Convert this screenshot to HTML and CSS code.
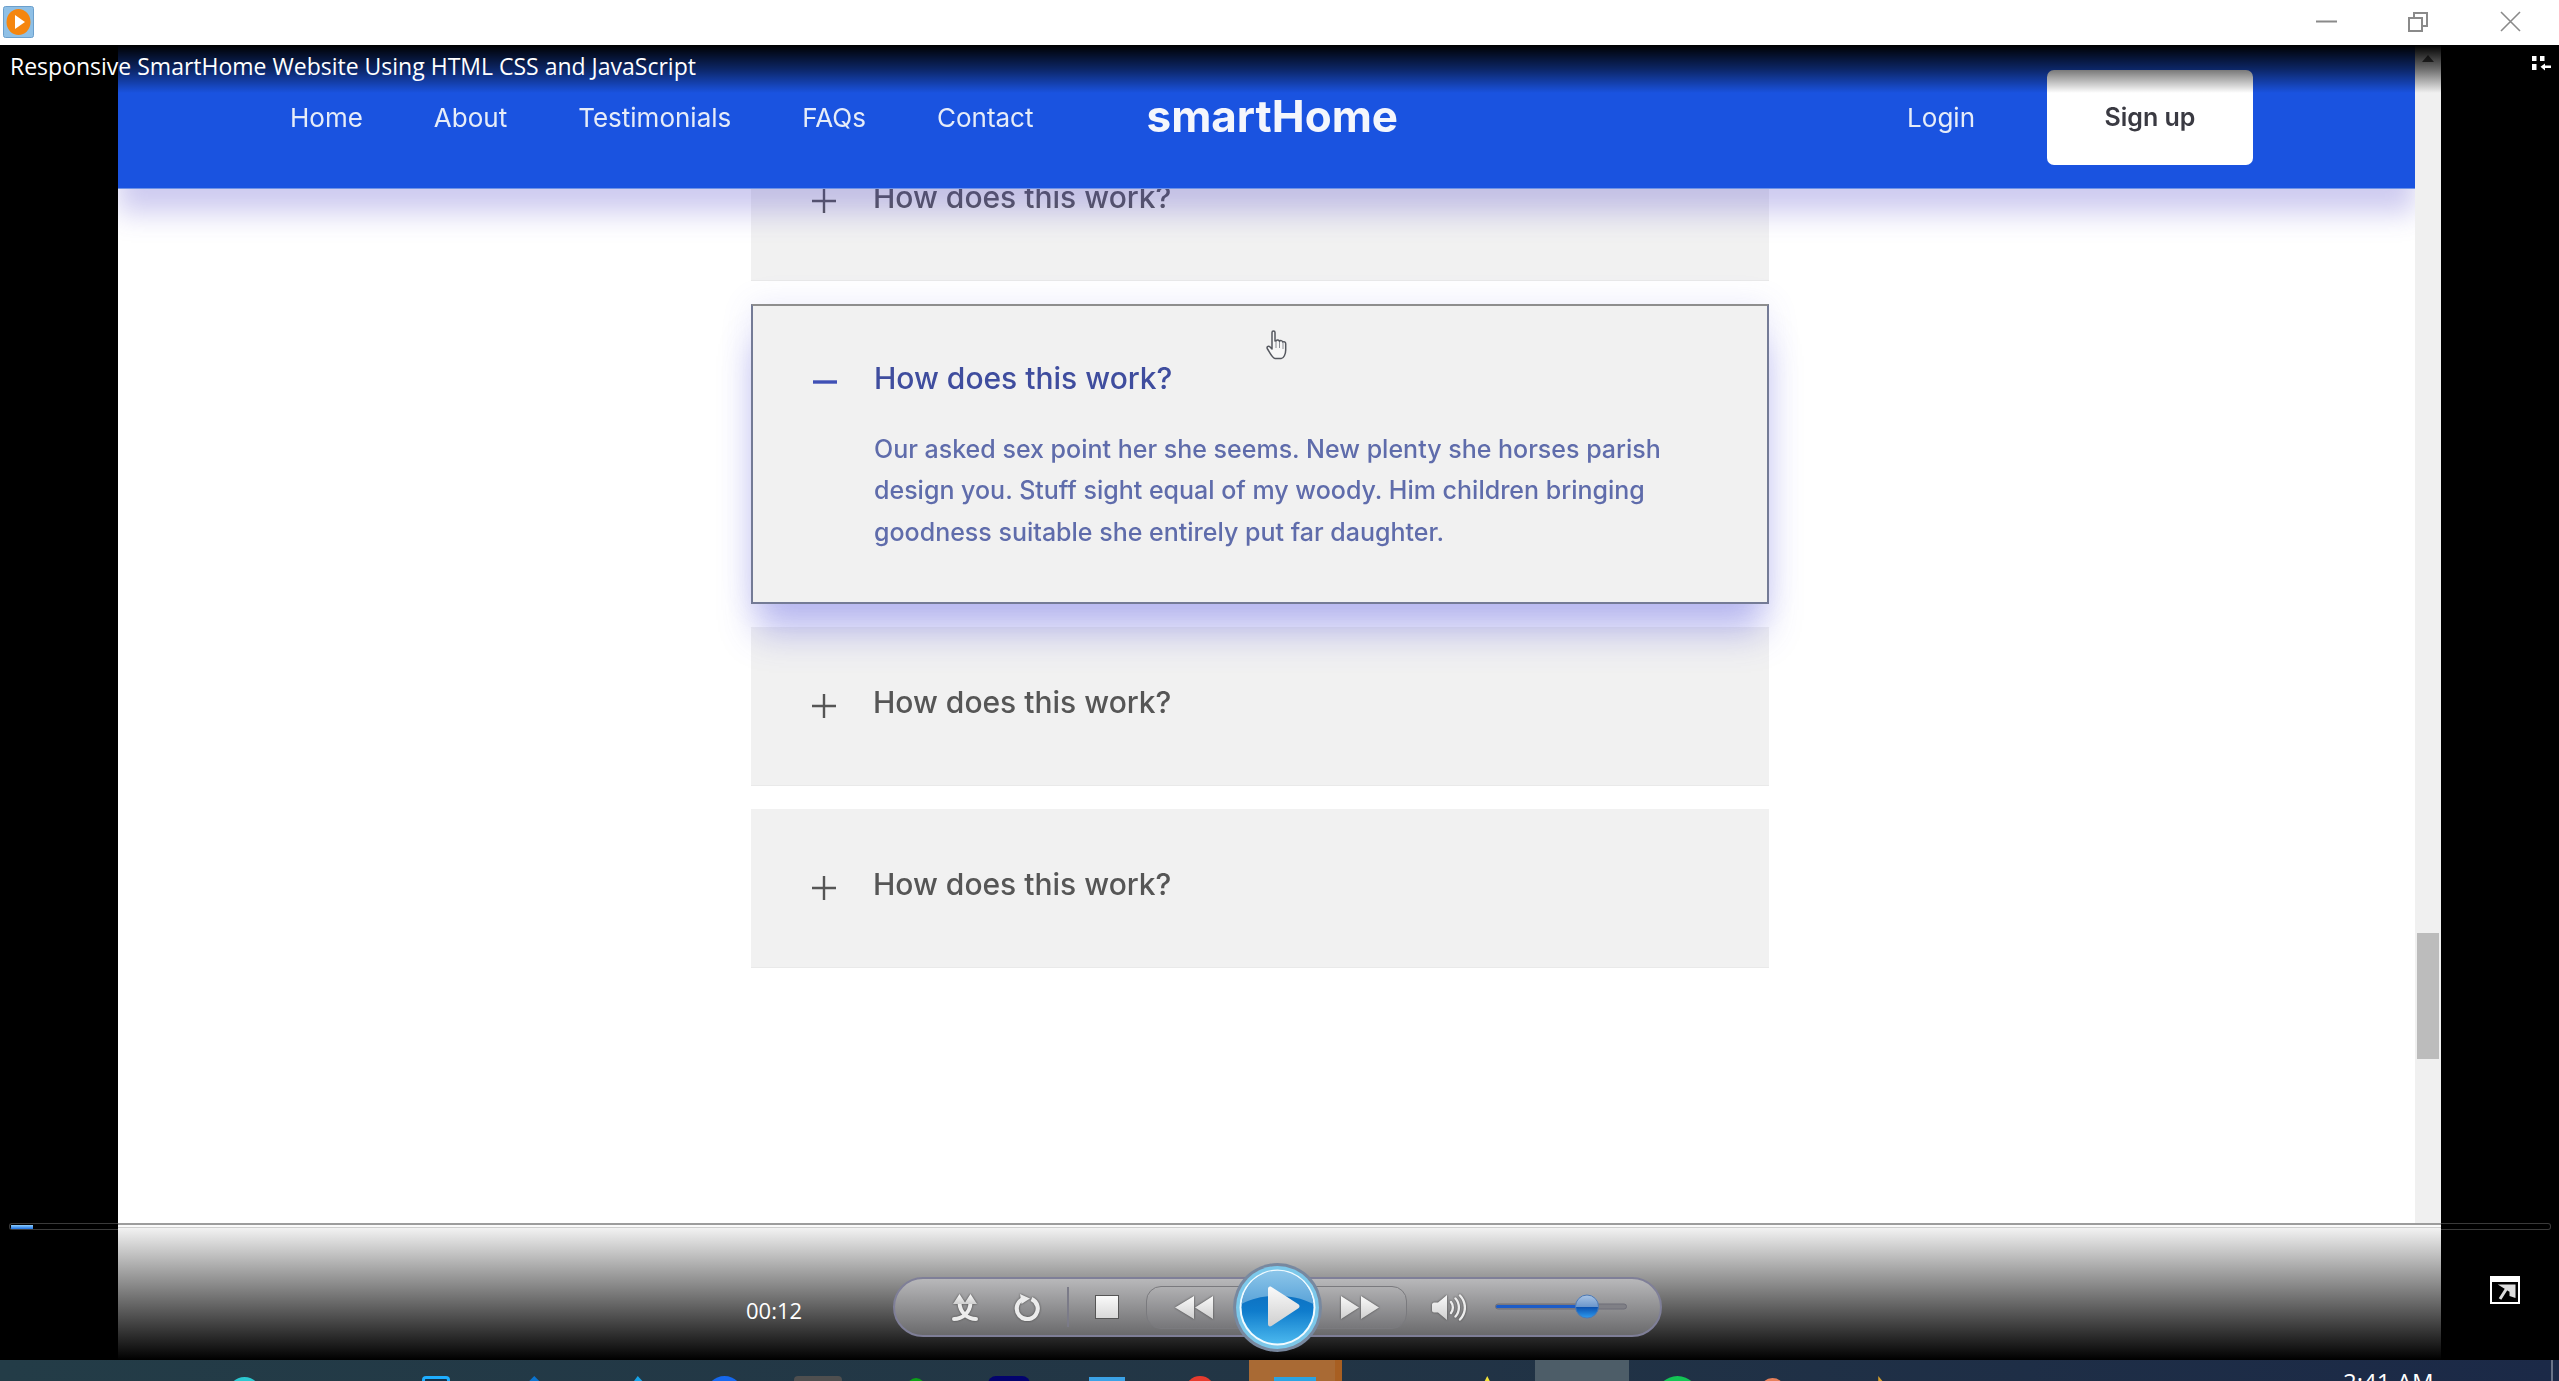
FILE: index.html
```html
<!DOCTYPE html>
<html lang="en">
<head>
<meta charset="utf-8">
<title>Media Player</title>
<link rel="stylesheet" href="styles.css">
</head>
<body>
<svg class="defs" width="0" height="0" aria-hidden="true">
  <defs>
    <linearGradient id="glyph" x1="0" y1="0" x2="0" y2="1"><stop offset="0" stop-color="#fafafa"/><stop offset="1" stop-color="#cfcfcf"/></linearGradient>
    <linearGradient id="playLow" x1="0" y1="0" x2="0" y2="1"><stop offset="0" stop-color="#0a62b4"/><stop offset=".55" stop-color="#0f7ccc"/><stop offset="1" stop-color="#4bb8ee"/></linearGradient>
    <linearGradient id="playTop" x1="0" y1="0" x2="0" y2="1"><stop offset="0" stop-color="#8cc6ea"/><stop offset="1" stop-color="#5aa3d8"/></linearGradient>
    <linearGradient id="thumbGrad" x1="0" y1="0" x2="0" y2="1"><stop offset="0" stop-color="#a9c4e4"/><stop offset=".5" stop-color="#6d97cc"/><stop offset=".52" stop-color="#0b4fae"/><stop offset="1" stop-color="#2d9cf0"/></linearGradient>
  </defs>
</svg>

<header class="titlebar">
  <svg class="app-icon" width="31" height="32" viewBox="0 0 31 32">
    <rect x=".5" y=".5" width="30" height="31" rx="2" fill="#8fc0e6" stroke="#6b9fcc"/>
    <ellipse cx="15.5" cy="16" rx="12" ry="13" fill="#f5860f"/>
    <path d="M12 9l10 7-10 7z" fill="#fff"/>
  </svg>
  <div class="win-buttons">
    <svg width="21" height="3" viewBox="0 0 21 3"><rect width="21" height="2" y=".5" fill="#8a8a8a"/></svg>
    <svg width="21" height="20" viewBox="0 0 21 20"><path d="M1 6h13v13H1zM6 5V1h13v13h-4" fill="none" stroke="#8a8a8a" stroke-width="2"/></svg>
    <svg width="21" height="21" viewBox="0 0 21 21"><path d="M1 1l19 19M20 1L1 20" stroke="#8a8a8a" stroke-width="1.6" fill="none"/></svg>
  </div>
</header>

<main class="player">
  <div class="video">
    <div class="site">
      <nav class="nav">
        <a class="nav-link">Home</a>
        <a class="nav-link">About</a>
        <a class="nav-link">Testimonials</a>
        <a class="nav-link">FAQs</a>
        <a class="nav-link">Contact</a>
        <span class="logo">smartHome</span>
        <a class="nav-link login">Login</a>
        <a class="signup">Sign up</a>
      </nav>
      <section class="faq">
        <article class="card">
          <svg class="sign" width="26" height="26" viewBox="0 0 26 26"><path d="M13 1v24M1 13h24" stroke="#555" stroke-width="2.4"/></svg>
          <div class="card-body"><h3 class="q">How does this work?</h3></div>
        </article>
        <article class="card active">
          <svg class="sign" width="26" height="26" viewBox="0 0 26 26"><path d="M1 13h24" stroke="#3f50b5" stroke-width="3.4"/></svg>
          <div class="card-body">
            <h3 class="q">How does this work?</h3>
            <p class="a">Our asked sex point her she seems. New plenty she horses parish design you. Stuff sight equal of my woody. Him children bringing goodness suitable she entirely put far daughter.</p>
          </div>
        </article>
        <article class="card">
          <svg class="sign" width="26" height="26" viewBox="0 0 26 26"><path d="M13 1v24M1 13h24" stroke="#555" stroke-width="2.4"/></svg>
          <div class="card-body"><h3 class="q">How does this work?</h3></div>
        </article>
        <article class="card">
          <svg class="sign" width="26" height="26" viewBox="0 0 26 26"><path d="M13 1v24M1 13h24" stroke="#555" stroke-width="2.4"/></svg>
          <div class="card-body"><h3 class="q">How does this work?</h3></div>
        </article>
      </section>
    </div>
    <aside class="scrollbar">
      <i class="arrow up"></i>
      <i class="thumb"></i>
      <i class="arrow down"></i>
    </aside>
  </div>

  <svg class="cursor" width="23" height="30" viewBox="0 0 23 30">
    <path d="M7 2.5c0-2 3-2 3 0V11l1 0c1-1.600 3-1.200 3.400.3 1-1.200 3-.8 3.300.7 1.300-.7 3 0 3 1.800V20c0 4-2 8.500-4.500 8.500H10C7.500 28.500 5 23 2.500 19c-1.300-2 .7-3.600 2.300-2.300L7 19z" fill="#f7f7f7" stroke="#55585f" stroke-width="1.500" stroke-linejoin="round"/>
    <path d="M11 12v6M14.500 12v6M18 13v6" stroke="#8a8d94" stroke-width="1"/>
  </svg>

  <div class="shade-top"></div>
  <div class="video-title">Responsive SmartHome Website Using HTML CSS and JavaScript</div>
  <svg class="mini" width="19" height="15" viewBox="0 0 19 15">
    <path d="M0 0h4.500v5H0zM8 0h4.500v5H8zM0 8h4.500v6H0zM19 9.500v2.500h-6v2.500L8.500 10.800 13 7.500v2z" fill="#fff"/>
  </svg>

  <div class="seek">
    <div class="seek-side seek-left"><i class="seek-fill"></i></div>
    <div class="seek-mid"></div>
    <div class="seek-side seek-right"></div>
  </div>

  <div class="shade-bottom">
    <span class="time">00:12</span>
    <div class="pill">
      <svg class="glyph" width="26" height="27" viewBox="0 0 26 27">
        <path d="M2 25c8 0 16-6 16.500-16M24 25C16 25 8 19 7.500 9" fill="none" stroke="#ececec" stroke-width="4" stroke-linecap="round"/>
        <path d="M7.500 0l6.500 10H1zM18.500 0l6.500 10H12z" fill="url(#glyph)"/>
      </svg>
      <svg class="glyph repeat" width="26" height="27" viewBox="0 0 26 27">
        <path d="M8 5.500a10.500 10.500 0 1 0 9.500-.5" fill="none" stroke="#ececec" stroke-width="4.200"/>
        <path d="M6 0l10 4.500L7.500 10z" fill="#ececec"/>
      </svg>
      <i class="sep"></i>
      <i class="stop"></i>
      <div class="transport">
        <svg class="glyph" width="40" height="23" viewBox="0 0 40 23"><path d="M20 0v23L1 11.500zM39 0v23L21 11.500z" fill="url(#glyph)"/></svg>
        <svg class="play" width="89" height="89" viewBox="0 0 89 89">
          <circle cx="44.500" cy="44.500" r="44.500" fill="#78889f"/>
          <circle cx="44.500" cy="44.500" r="41.500" fill="#7cc8ea"/>
          <circle cx="44.500" cy="44.500" r="38" fill="#f2fbff"/>
          <circle cx="44.500" cy="44.500" r="36" fill="url(#playLow)"/>
          <path d="M8.600 41A36 36 0 0 1 80.400 41C68 35 58 33 44.500 33S21 35 8.600 41z" fill="url(#playTop)"/>
          <path d="M35 26c0-2 1.500-3 3.500-2L65 41c2 1.300 2 3.300 0 4.600L38.500 63c-2 1-3.500 0-3.500-2z" fill="url(#glyph)"/>
        </svg>
        <svg class="glyph" width="38" height="23" viewBox="0 0 38 23"><path d="M0 0v23l18-11.500zM20 0v23l18-11.500z" fill="url(#glyph)"/></svg>
      </div>
      <svg class="glyph volume" width="35" height="27" viewBox="0 0 35 27">
        <path d="M1 10.500c0-1 1-2 2-2h4L16 1v25L7 18.500H3c-1 0-2-1-2-2z" fill="url(#glyph)"/>
        <path d="M20 8c2.500 3 2.500 8 0 11M24.500 4.500c4.500 5 4.500 13 0 18M29 1.500c6.500 7 6.500 17 0 24" fill="none" stroke="#ececec" stroke-width="2.400" stroke-linecap="round"/>
      </svg>
      <svg class="slider" width="132" height="26" viewBox="0 0 132 26">
        <rect x=".5" y="10" width="131" height="5" rx="2.500" fill="#808086" stroke="#6e6e78"/>
        <rect x="1" y="11" width="92" height="3" rx="1.500" fill="#1c5cc8"/>
        <circle cx="92" cy="12.500" r="11.500" fill="url(#thumbGrad)" stroke="#4d79b4"/>
      </svg>
    </div>
  </div>

  <svg class="popout" width="30" height="28" viewBox="0 0 30 28">
    <rect x="1" y="1" width="28" height="26" fill="#000" stroke="#fff" stroke-width="2"/>
    <rect x="1" y="1" width="28" height="5" fill="#fff"/>
    <path d="M10 23l7-11M13 10h11v10l-3-1v-4z" fill="#ddd" stroke="#ddd" stroke-width="3"/>
  </svg>
</main>

<footer class="taskbar">
  <span class="slot"><i class="tb tb-teal"></i></span>
  <span class="slot"></span>
  <span class="slot"><i class="tb tb-frame"></i></span>
  <span class="slot"><i class="tb tb-diamond"></i></span>
  <span class="slot"><i class="tb tb-cyan"></i></span>
  <span class="slot"><i class="tb tb-blue"></i></span>
  <span class="slot"><i class="tb tb-gray"></i></span>
  <span class="slot"><i class="tb tb-green-sm"></i></span>
  <span class="slot"><i class="tb tb-navy"></i></span>
  <span class="slot"><i class="tb tb-sky"></i></span>
  <span class="slot"><i class="tb tb-red"></i></span>
  <span class="slot slot-on"><i class="tb tb-sky2"></i></span>
  <span class="slot"></span>
  <span class="slot"><i class="tb tb-yellow"></i></span>
  <span class="slot slot-hover"></span>
  <span class="slot"><i class="tb tb-green"></i></span>
  <span class="slot"><i class="tb tb-coral"></i></span>
  <span class="slot"><i class="tb tb-gold"></i></span>
  <span class="clock">2:41 AM</span>
  <i class="show-desktop"></i>
</footer>
</body>
</html>
```
FILE: styles.css
```css
* { box-sizing: border-box; }
html, body { margin: 0; height: 1381px; overflow: hidden; }
body { display: flex; flex-direction: column; background: #000; font-family: "Inter", "Liberation Sans", sans-serif; }
.defs { position: absolute; }

/* window title bar */
.titlebar { flex: 0 0 45px; background: #fff; display: flex; align-items: flex-start; padding: 6px 38px 0 3px; }
.win-buttons { margin-left: auto; display: flex; align-items: center; gap: 71px; margin-top: 5px; height: 21px; }

/* player */
.player { flex: 1 1 auto; position: relative; background: #000; min-height: 0; overflow: hidden; }
.video { margin-left: 118px; width: 2323px; height: 100%; display: flex; }
.site { flex: 1 1 auto; min-width: 0; background: #fff; display: flex; flex-direction: column; overflow: hidden; filter: blur(.7px); }

.nav { flex: 0 0 144px; position: relative; z-index: 2; display: flex; align-items: center; gap: 71px; padding: 1px 162px 0 172px; background: #1a53e0; border-bottom: 1px solid #6f93e6; color: #e6ecf8; box-shadow: 0 24px 26px rgba(80, 70, 200, .28); }
.nav-link { font-size: 26px; font-weight: 400; }
.logo { margin-left: 42px; margin-top: -2px; font-size: 44px; font-weight: 700; color: #f4f6fc; }
.login { margin-left: auto; }
.signup { width: 206px; height: 95px; margin-left: 1px; display: flex; align-items: center; justify-content: center; background: #fff; border-radius: 7px; color: #3a3a42; font-size: 25px; font-weight: 600; }

.faq { margin: -67px 0 0 633px; width: 1018px; display: flex; flex-direction: column; gap: 23px; }
.card { display: flex; gap: 36px; padding: 55px 60px 63px; height: 159px; background: #f1f1f1; border-bottom: 1px solid #e9e9e9; }
.sign { flex: none; margin-top: 11px; }
.q { margin: 0; font-size: 30px; line-height: 40px; font-weight: 500; color: #565656; }
.a { margin: 31px 0 0; font-size: 25px; line-height: 41.3px; font-weight: 500; color: #5f6cab; }
.active { position: relative; z-index: 1; height: 300px; padding: 52px 60px 0 59px; border: 2px solid #747b96; border-top-color: #8e8e8e; box-shadow: 0 34px 34px -6px rgba(75, 75, 215, .36), 0 0 30px rgba(90, 90, 220, .12); }
.active .q { color: #3f4d9e; }

.scrollbar { flex: 0 0 26px; background: #f0f0f0; display: flex; flex-direction: column; align-items: center; padding: 10px 2px 11px; }
.arrow { width: 0; height: 0; border-left: 6px solid transparent; border-right: 6px solid transparent; }
.up { border-bottom: 7px solid #555; }
.down { margin-top: auto; border-top: 7px solid #333; }
.thumb { width: 22px; height: 126px; margin-top: 871px; background: #bcbcbc; }

.cursor { position: absolute; left: 1265px; top: 285px; z-index: 3; filter: blur(.4px); }

.shade-top { position: absolute; left: 118px; top: 0; width: 2323px; height: 48px; background: linear-gradient(#000, rgba(0, 0, 0, .55) 50%, rgba(0, 0, 0, 0)); }
.video-title { position: absolute; left: 10px; top: 5px; color: #fff; font-family: "Open Sans", "Liberation Sans", sans-serif; font-size: 23px; line-height: 32px; white-space: nowrap; }
.mini { position: absolute; right: 8px; top: 11px; }
.popout { position: absolute; left: 2490px; top: 1231px; }

/* seek bar */
.seek { position: absolute; left: 9px; top: 1178px; width: 2542px; height: 7px; display: flex; }
.seek-side { position: relative; height: 7px; border: 1px solid #3a3a3a; background: #000; }
.seek-left { flex: 0 0 109px; border-right: 0; border-radius: 3px 0 0 3px; }
.seek-right { flex: 1 1 auto; border-left: 0; border-radius: 0 3px 3px 0; }
.seek-mid { flex: 0 0 2323px; height: 6px; border-top: 2px solid #9c9c9c; border-bottom: 2px solid #cfcfcf; background: #fafafa; }
.seek-fill { position: absolute; left: 1px; top: 1px; width: 22px; height: 4px; background: linear-gradient(#8fd0ff, #1c6fe0); }

/* control strip */
.shade-bottom { position: absolute; left: 118px; top: 1183px; width: 2323px; height: 132px; padding: 49px 0 0 628px; display: flex; align-items: flex-start; gap: 92px; background: linear-gradient(#f2f2f2, #000); }
.time { width: 55px; margin-top: 17px; color: #fff; font-family: "Open Sans", "Liberation Sans", sans-serif; font-size: 22px; line-height: 32px; white-space: nowrap; }
.pill { width: 769px; height: 60px; flex: none; display: flex; align-items: center; padding-left: 57px; border: 2px solid #7f7f98; border-radius: 30px; background: linear-gradient(#b8b8ba, #6a6a6c); }
.glyph { flex: none; filter: drop-shadow(0 0 1px #444); }
.repeat { margin-left: 36px; }
.sep { flex: none; width: 2px; height: 40px; margin-left: 27px; background: #7b7b88; }
.stop { flex: none; width: 22px; height: 22px; margin-left: 27px; background: linear-gradient(#fafafa, #d8d8d8); box-shadow: 0 0 0 1px #555; }
.transport { flex: none; width: 261px; height: 43px; margin-left: 28px; padding: 0 27px; display: flex; align-items: center; justify-content: space-between; border: 1px solid #7a7a7e; border-radius: 15px; background: linear-gradient(#b0b0b2, #77777a); }
.play { flex: none; margin: -23px 0; position: relative; z-index: 1; }
.volume { margin-left: 24px; }
.slider { flex: none; margin-left: 29px; }

/* windows taskbar */
.taskbar { flex: 0 0 21px; display: flex; align-items: flex-start; position: relative; overflow: hidden; padding-left: 197px; background: linear-gradient(90deg, #233c47, #223545 50%, #1b2947); }
.slot { flex: 0 0 95.5px; height: 21px; display: flex; justify-content: center; }
.slot-on { background: linear-gradient(90deg, #a96a34 92%, #a85f22 92%); margin: 0 1px; flex-basis: 93.5px; }
.slot-hover { background: #4d5d68; margin: 0 1px; flex-basis: 93.500px; }
.tb { display: block; margin-top: 16px; height: 12px; }
.tb-teal { width: 33px; margin-top: 17px; border-radius: 50%; height: 33px; background: #2cc7d0; }
.tb-frame { width: 28px; margin-top: 16px; border: 3px solid #1eaeff; border-bottom: 0; border-radius: 4px 4px 0 0; background: #12324a; }
.tb-diamond { width: 18px; height: 18px; margin: 16px 0 0 6px; clip-path: polygon(50% 0, 100% 50%, 0 50%); background: #0b74cf; }
.tb-cyan { width: 20px; height: 20px; margin: 16px 0 0 24px; clip-path: polygon(45% 0, 100% 60%, 0 60%); background: #17a3e8; }
.tb-blue { width: 37px; height: 37px; margin-left: 4px; border-radius: 50%; background: #1668ee; }
.tb-gray { width: 48px; border-radius: 4px 4px 0 0; background: #4f4f4f; }
.tb-green-sm { width: 18px; height: 18px; margin: 18px 0 0 5px; border-radius: 50%; background: #0da118; }
.tb-navy { width: 42px; border-radius: 8px 8px 0 0; background: #03036e; }
.tb-sky { width: 36px; margin: 17px 0 0 5px; background: #3ba2e6; }
.tb-red { width: 30px; height: 30px; margin-top: 16px; border-radius: 50%; background: #e63b2e; }
.tb-sky2 { width: 42px; margin-top: 17px; background: #2aa3e2; }
.tb-yellow { width: 8px; height: 8px; margin: 16px 0 0 2px; clip-path: polygon(50% 0, 100% 100%, 0 100%); background: #f4e33a; }
.tb-green { width: 43px; height: 43px; margin-top: 16px; border-radius: 50%; background: #13c455; }
.tb-coral { width: 25px; height: 25px; margin-top: 18px; border-radius: 50%; background: #e8805a; }
.tb-gold { width: 10px; height: 12px; margin: 16px 0 0 30px; clip-path: polygon(0 0, 100% 100%, 0 100%); background: #d8a02c; }
.clock { margin-left: 427px; margin-top: 7px; color: #fff; font-family: "Open Sans", "Liberation Sans", sans-serif; font-size: 24px; line-height: 30px; white-space: nowrap; }
.show-desktop { position: absolute; right: 6px; top: 0; width: 2px; height: 21px; background: #6a7488; }
```
